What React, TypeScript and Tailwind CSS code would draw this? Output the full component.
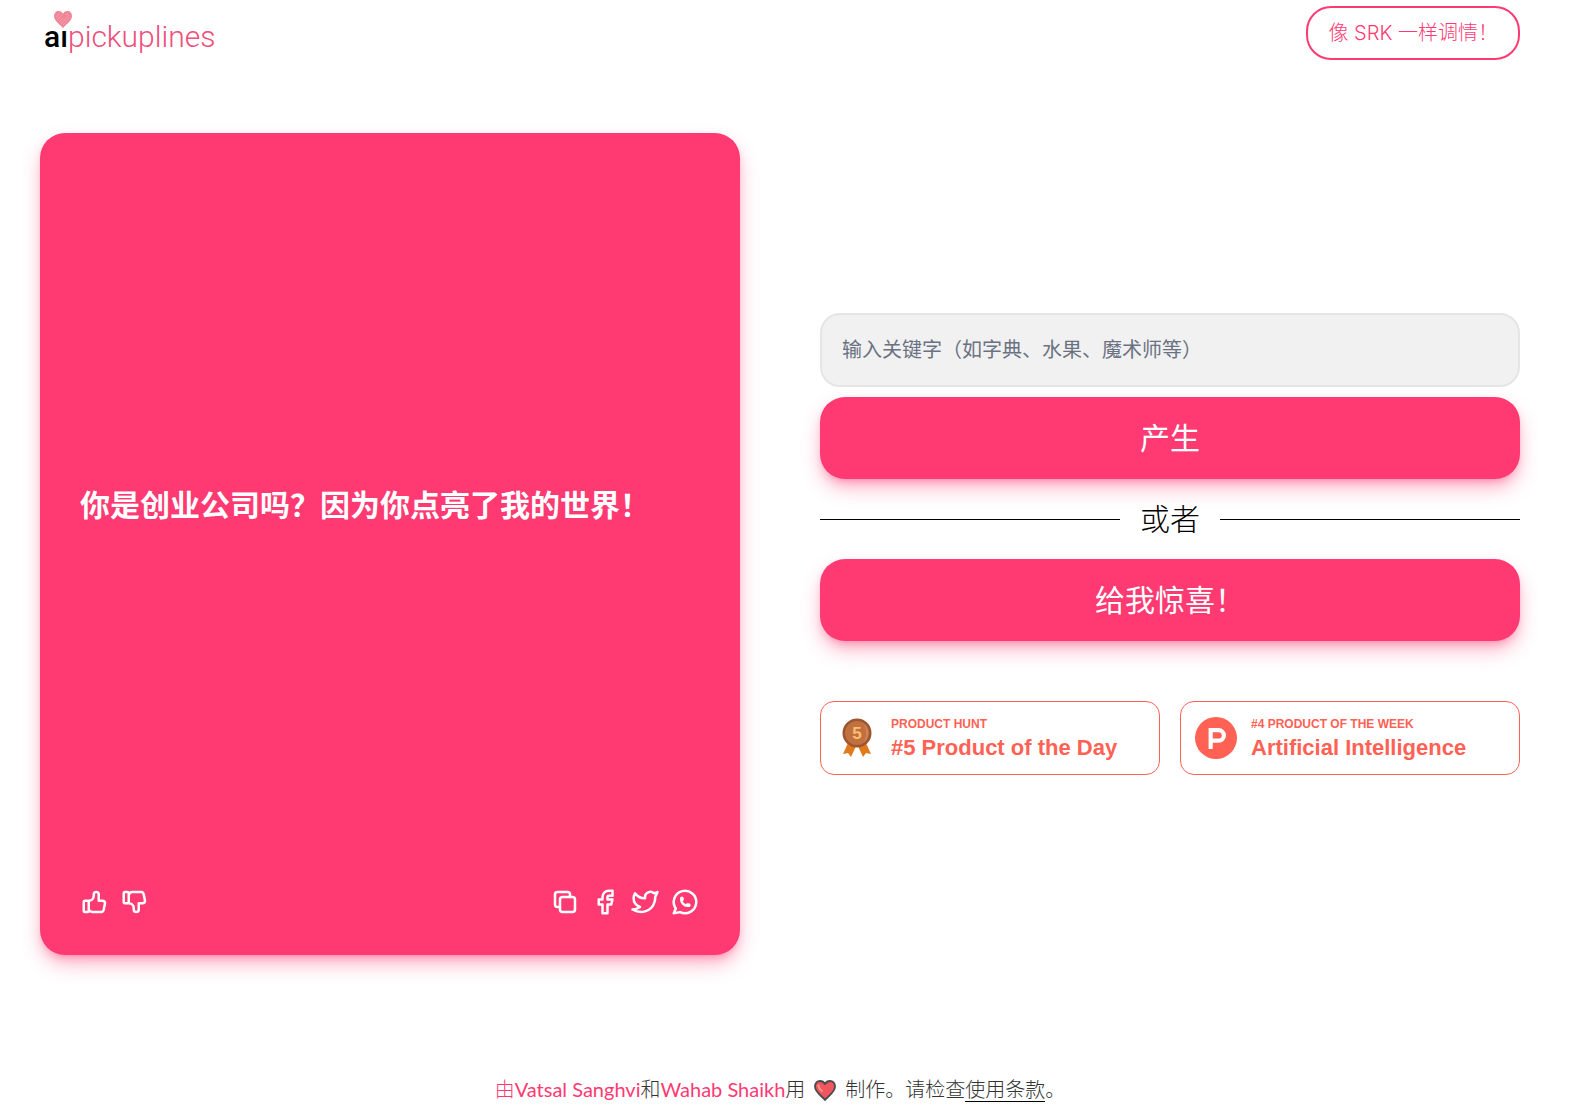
import type { ReactNode } from "react";

const shadow =
  "shadow-[0_10px_20px_-2px_rgba(255,58,114,0.4),0_5px_10px_-4px_rgba(255,58,114,0.45)]";

function LineIcon({ children }: { children: ReactNode }) {
  return (
    <svg
      aria-hidden="true"
      viewBox="0 0 24 24"
      className="size-[30px]"
      fill="none"
      stroke="currentColor"
      strokeWidth="2"
      strokeLinecap="round"
      strokeLinejoin="round"
    >
      {children}
    </svg>
  );
}

const thumbPath =
  "M7 11v8a1 1 0 0 1-1 1H4a1 1 0 0 1-1-1v-7a1 1 0 0 1 1-1h3a4 4 0 0 0 4-4V6a2 2 0 0 1 4 0v5h3a2 2 0 0 1 2 2l-1 5a2 3 0 0 1-2 2h-7a3 3 0 0 1-3-3";

function IconButton({ label, children }: { label: string; children: ReactNode }) {
  return (
    <button type="button" aria-label={label} className="cursor-pointer">
      <LineIcon>{children}</LineIcon>
    </button>
  );
}

function Logo() {
  return (
    <a
      href="#"
      aria-label="aipickuplines"
      className="relative ml-1 flex items-baseline pt-2 text-[30px] leading-[56px]"
    >
      <svg
        aria-hidden="true"
        viewBox="0 0 18 17"
        className="absolute top-2.5 left-[10px] h-[17px] w-[18px]"
      >
        <path
          d="M9 17C6 13.500 0 10 0 5 0 2 2 0 4.600 0 6.800 0 8.300 1.300 9 3 9.700 1.300 11.200 0 13.400 0 16 0 18 2 18 5c0 5-6 8.500-9 12Z"
          fill="#ee8698"
        />
        <path
          d="M2 6l4-4M3 9l5-5M5 11l4-4M7 13l8-9M9 14l7-8M12 4l2-2"
          stroke="#f7b3bf"
          strokeWidth="0.6"
        />
      </svg>
      <span className="font-['Roboto'] font-medium text-black">aı</span>
      <span className="font-['Roboto'] font-light text-[#ee4f7b]">pickuplines</span>
    </a>
  );
}

function Medal() {
  return (
    <svg aria-hidden="true" viewBox="0 0 30 40" className="ml-0.5 h-10 w-[30px]">
      <path d="M6 25 1 36l5-1 3 4 6-13 6 13 3-4 5 1-5-11Z" fill="#e07a1c" />
      <circle cx="15" cy="15" r="14.500" fill="#9c5530" />
      <circle cx="15" cy="15" r="12" fill="#c1703f" />
      <path d="M21 5a12 12 0 0 1 0 20c4-6 4-14 0-20Z" fill="#cc8454" />
      <text
        x="15"
        y="21"
        textAnchor="middle"
        fontSize="17"
        fontWeight="700"
        fontFamily="Liberation Sans, sans-serif"
        fill="#ffbd71"
      >
        5
      </text>
    </svg>
  );
}

function ProductHuntMark() {
  return (
    <svg aria-hidden="true" viewBox="0 0 31 31" className="size-[42px]">
      <circle cx="15.500" cy="15.500" r="15.500" fill="#ff6154" />
      <path
        fill="#fff"
        fillRule="evenodd"
        d="M17.433 15.956h-4.340v-4.650h4.340a2.325 2.325 0 0 1 0 4.650m0-7.750h-7.404v15.500h3.064v-4.650h4.340a5.425 5.425 0 0 0 0-10.850"
      />
    </svg>
  );
}

function Badge({ icon, label, title }: { icon: ReactNode; label: string; title: string }) {
  return (
    <a
      href="#"
      className="flex h-[74px] flex-1 items-center rounded-[14px] border border-[#ff6154] font-['Liberation_Sans',sans-serif] font-bold text-[#ff6154]"
    >
      <span className="ml-3.5 flex w-[42px] justify-center">{icon}</span>
      <span className="ml-3.5 flex flex-col">
        <span className="text-[12px] leading-5">{label}</span>
        <span className="text-[22px] leading-7">{title}</span>
      </span>
    </a>
  );
}

function Heart() {
  return (
    <svg aria-hidden="true" viewBox="0 0 24 24" className="mx-2 inline-block size-6 align-[-5px]">
      <path
        d="M12 22C9.500 18.500 2 14.500 2 8.500 2 5 4.300 3 7 3c2.300 0 4 1.200 5 3 1-1.800 2.700-3 5-3 2.700 0 5 2 5 5.500 0 6-7.500 10-10 13.500Z"
        fill="#f05660"
        stroke="#4b4b4d"
        strokeWidth="1.800"
        strokeLinejoin="round"
      />
      <path d="M5.500 7.500c.2 2 1.500 4 3.500 5.500" stroke="#ff9a86" strokeWidth="1.800" fill="none" strokeLinecap="round" />
    </svg>
  );
}

const bigButton =
  "h-[82px] w-full cursor-pointer rounded-[25px] bg-[#ff3a72] text-[30px] leading-[42px] font-normal text-white";

export default function App() {
  return (
    <div className="flex min-h-screen flex-col bg-white pr-[54px] pl-10 font-['Inter','Noto_Sans_CJK_SC',sans-serif] text-[20px] leading-7 font-light text-black">
      <header className="flex h-[66px] items-center justify-between">
        <Logo />
        <a
          href="#"
          className="flex h-[54px] items-center rounded-[25px] border-2 border-[#ff3a72] px-5 text-[#ff3a72]"
        >
          像 SRK 一样调情！
        </a>
      </header>

      <main className="grid flex-1 grid-cols-2 gap-20 py-[67px]">
        <section className={`flex flex-col rounded-[25px] bg-[#ff3a72] px-10 pb-[38px] text-white ${shadow}`}>
          <p className="flex flex-1 items-center text-[30px] leading-[42px] font-bold">
            你是创业公司吗？因为你点亮了我的世界！
          </p>
          <div className="flex justify-between pt-2.5">
            <div className="flex gap-2.5">
              <IconButton label="赞">
                <path d={thumbPath} />
              </IconButton>
              <IconButton label="踩">
                <path d={thumbPath} transform="matrix(1 0 0 -1 0 24)" />
              </IconButton>
            </div>
            <div className="flex gap-2.5">
              <IconButton label="复制">
                <rect x="8" y="8" width="12" height="12" rx="2" />
                <path d="M16 8V6a2 2 0 0 0-2-2H6a2 2 0 0 0-2 2v8a2 2 0 0 0 2 2h2" />
              </IconButton>
              <IconButton label="Facebook">
                <path d="M7 10v4h3v7h4v-7h3l1-4h-4V8a1 1 0 0 1 1-1h3V3h-3a5 5 0 0 0-5 5v2H7" />
              </IconButton>
              <IconButton label="Twitter">
                <path d="M22 4.010c-1 .49-1.980.689-3 .99-1.121-1.265-2.783-1.335-4.380-.737S11.977 6.323 12 8v1c-3.245.083-6.135-1.395-8-4 0 0-4.182 7.433 4 11-1.872 1.247-3.739 2.088-6 2 3.308 1.803 6.913 2.423 10.034 1.517 3.580-1.040 6.522-3.723 7.651-7.742a13.840 13.840 0 0 0 .497-3.753C20.180 7.773 21.692 5.250 22 4.009Z" />
              </IconButton>
              <IconButton label="WhatsApp">
                <path d="m3 21 1.650-3.800a9 9 0 1 1 3.400 2.900L3 21" />
                <path d="M9 10a.5.5 0 0 0 1 0V9a.5.5 0 0 0-1 0v1a5 5 0 0 0 5 5h1a.5.5 0 0 0 0-1h-1a.5.5 0 0 0 0 1" />
              </IconButton>
            </div>
          </div>
        </section>

        <section className="flex flex-col justify-center">
          <input
            type="text"
            aria-label="关键字"
            placeholder="输入关键字（如字典、水果、魔术师等）"
            className="h-[74px] w-full rounded-[20px] border-2 border-[#e5e5e5] bg-[#f1f1f1] px-5 font-normal placeholder:text-gray-500"
          />
          <button type="button" className={`mt-2.5 ${bigButton} ${shadow}`}>
            产生
          </button>
          <div className="flex h-20 items-center gap-5 text-[30px] leading-[42px]">
            <span className="h-px flex-1 bg-black" />
            或者
            <span className="h-px flex-1 bg-black" />
          </div>
          <button type="button" className={`${bigButton} ${shadow}`}>
            给我惊喜！
          </button>
          <div className="mt-[60px] flex gap-5">
            <Badge icon={<Medal />} label="PRODUCT HUNT" title="#5 Product of the Day" />
            <Badge icon={<ProductHuntMark />} label="#4 PRODUCT OF THE WEEK" title="Artificial Intelligence" />
          </div>
        </section>
      </main>

      <footer className="pt-[53px] pb-2.5 text-center font-['Lato','Noto_Sans_CJK_SC',sans-serif] text-[#333]">
        <a href="#" className="text-[#ff3a72]">
          由<span className="font-normal">Vatsal Sanghvi</span>
        </a>
        和
        <a href="#" className="font-normal text-[#ff3a72]">Wahab Shaikh</a>用
        <Heart />
        制作。请检查
        <a href="#" className="border-b border-black">使用条款</a>。
      </footer>
    </div>
  );
}
